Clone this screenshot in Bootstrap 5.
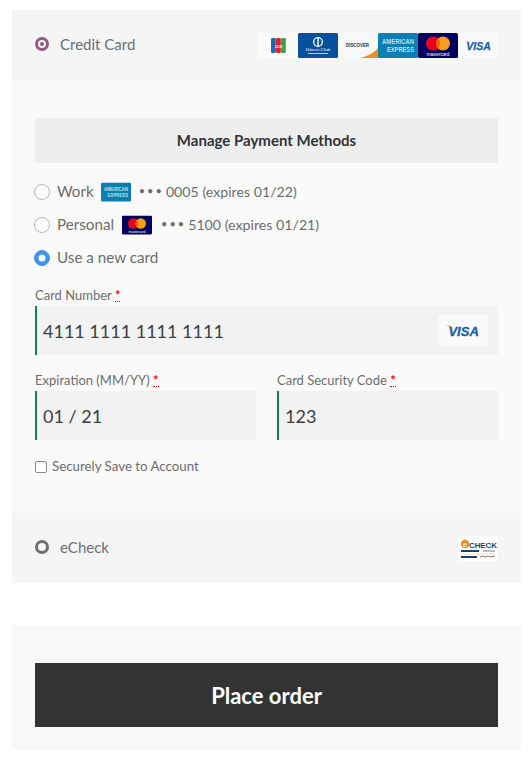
<!DOCTYPE html>
<html lang="en">
<head>
<meta charset="utf-8">
<title>Checkout</title>
<link rel="stylesheet" href="https://cdn.jsdelivr.net/npm/bootstrap@5.3.0/dist/css/bootstrap.min.css">
<style>
html,body{background:#fff;}
body{font-family:Lato,"Liberation Sans",sans-serif;color:#6d6d6d;margin:0;padding:10px 7px 9px 12px;width:528px;height:759px;overflow:hidden;}
.pay-head{height:70px;background:#f5f5f5;padding:0 23px;display:flex;align-items:center;justify-content:space-between;}
.pay-name{font-size:15px;color:#6d6d6d;display:flex;align-items:center;gap:11px;line-height:20px;padding-bottom:2px;}
.dot-a{width:14px;height:14px;border-radius:50%;border:3px solid #96588a;position:relative;}
.dot-a::after{content:"";position:absolute;inset:2px;background:#96588a;border-radius:50%;}
.dot-b{width:14px;height:14px;border-radius:50%;border:3px solid #6d6d6d;}
.logos{display:flex;}
.logos svg{display:block;}
.pay-body{background:#fafafa;height:433px;padding:38px 23px 0;}
.btn-manage{display:block;width:100%;height:45px;background:#eee;color:#333;font-weight:700;font-size:15px;border:0;border-radius:0;padding:0;}
.saved-list{margin-top:12px;margin-left:-1px;}
.saved-row{display:flex;align-items:center;height:33px;font-size:15.2px;color:#6d6d6d;}
.saved-row svg{display:block;}
.saved-row .form-check-input{width:16px;height:16px;margin:0 7px 0 0;flex:none;background-color:#fff;border:1px solid #b5b5b5;}
.saved-row .form-check-input:checked{background-color:#3f93f5;border-color:#3f93f5;}
.ico-work{margin:0 8px 0 7px;}
.ico-pers{margin:0 9px 0 8px;}
.dots{letter-spacing:2px;font-size:11px;margin-right:2px;}
.detail{font-size:14.2px;}
.card-field{margin-top:13px;}
.fld-label{font-size:13px;color:#6d6d6d;margin:0;display:block;line-height:16px;height:19px;}
.req{color:#f00;font-weight:700;border-bottom:1px dotted #f00;line-height:1;display:inline-block;height:13px;}
.fld-input{height:49px;border:0;border-left:2px solid #0f834d;border-radius:0;background:#f2f2f2;color:#3d3f45;font-size:18px;padding:0 6px;box-shadow:none;}
.fld-input:focus{background:#f2f2f2;color:#3d3f45;border-left:2px solid #0f834d;box-shadow:none;}
.fld-wrap{position:relative;}
.fld-logo{position:absolute;right:10px;top:9px;}
.fld-logo svg{display:block;}
.fld-pair{display:grid;grid-template-columns:221px 221px;column-gap:21px;margin-top:17px;}
.save-row{display:flex;align-items:center;gap:5px;font-size:13.300px;margin:17px 0 0;color:#6d6d6d;}
.save-row .form-check-input{width:12px;height:12px;margin:0;border-radius:2px;border:1px solid #8c8c8c;flex:none;background-color:#fff;}
.gap-pl{margin-top:42px;height:125px;background:#f8f8f8;padding:38px 23px 0;}
.btn-place{display:block;width:100%;height:64px;background:#333;color:#fff;font-weight:700;font-size:22px;border:0;border-radius:0;padding:0;}
.btn-place:hover{background:#333;color:#fff;}
.btn-manage:hover{background:#eee;color:#333;}
</style>
</head>
<body>
<svg width="0" height="0" class="d-none">
<defs>
<symbol id="c-visa" viewBox="0 0 40 25"><rect width="40" height="25" rx="1.5" fill="#fafafa"/><path d="M6 8.500c2.200.2 4 1.300 5 3.500l-1-3.500z" fill="#f4a51c"/><text x="20.500" y="17.200" text-anchor="middle" font-family="Liberation Sans,sans-serif" font-size="10.500" font-style="italic" font-weight="700" fill="#1a5fa8" stroke="#1a5fa8" stroke-width=".25">VISA</text></symbol>
<symbol id="c-amex" viewBox="0 0 40 25"><rect width="40" height="25" rx="1.500" fill="#0b7fb2"/><text x="4" y="10.500" textLength="32" lengthAdjust="spacingAndGlyphs" font-family="Liberation Sans,sans-serif" font-size="7" font-weight="700" fill="#bfe0ee">AMERICAN</text><text x="9" y="18.800" textLength="27" lengthAdjust="spacingAndGlyphs" font-family="Liberation Sans,sans-serif" font-size="7" font-weight="700" fill="#bfe0ee">EXPRESS</text></symbol>
<symbol id="c-mc" viewBox="0 0 40 25"><rect width="40" height="25" rx="1.500" fill="#00005f"/><circle cx="15" cy="10.500" r="7" fill="#e8001c"/><circle cx="25" cy="10.500" r="7" fill="#f79e1b"/><path d="M20 5.600a7 7 0 0 1 0 9.800a7 7 0 0 1 0-9.800z" fill="#ff5f00"/><text x="20" y="22.800" text-anchor="middle" font-family="Liberation Sans,sans-serif" font-size="4.500" fill="#fff">mastercard</text></symbol>
</defs>
</svg>

<section class="pay-head">
  <div class="pay-name"><span class="dot-a"></span><span>Credit Card</span></div>
  <div class="logos">
    <svg width="40" height="25" viewBox="0 0 40 25"><rect width="40" height="25" rx="1.500" fill="#fafafa"/><rect x="13" y="5" width="4.800" height="15" rx="1.200" fill="#1769b5"/><rect x="18" y="5" width="4.800" height="15" rx="1.200" fill="#d8232f"/><rect x="23" y="5" width="4.800" height="15" rx="1.200" fill="#3aa53f"/><text x="20.500" y="14.500" text-anchor="middle" font-family="Liberation Sans,sans-serif" font-size="4" font-weight="700" fill="#eef2f4">JCB</text></svg>
    <svg width="40" height="25" viewBox="0 0 40 25"><rect width="40" height="25" rx="1.500" fill="#06509c"/><circle cx="20" cy="9" r="5" fill="#fff"/><circle cx="20" cy="9" r="3.700" fill="#06509c"/><rect x="19.300" y="5" width="1.400" height="8" fill="#fff"/><text x="20" y="18" text-anchor="middle" font-family="Liberation Serif,serif" font-size="5" fill="#fff">Diners Club</text><rect x="10" y="20" width="20" height="1" fill="#b9cde3"/></svg>
    <svg width="40" height="25" viewBox="0 0 40 25"><rect width="40" height="25" fill="#f8f8f8"/><path d="M22 25C30 23 36 20 40 15V25z" fill="#f28a1f"/><text x="19.500" y="14" text-anchor="middle" font-family="Liberation Sans,sans-serif" font-size="5" font-weight="700" fill="#333" textLength="23" lengthAdjust="spacingAndGlyphs">DISCOVER</text></svg>
    <svg width="40" height="25"><use href="#c-amex"/></svg>
    <svg width="40" height="25"><use href="#c-mc"/></svg>
    <svg width="40" height="25"><use href="#c-visa"/></svg>
  </div>
</section>

<section class="pay-body">
  <button type="button" class="btn btn-manage">Manage Payment Methods</button>
  <div class="saved-list">
    <div class="saved-row"><input class="form-check-input" type="radio" name="tok"><span>Work</span><svg class="ico-work" width="30" height="20"><use href="#c-amex"/></svg><span class="dots">•••</span><span class="detail">0005 (expires 01/22)</span></div>
    <div class="saved-row"><input class="form-check-input" type="radio" name="tok"><span>Personal</span><svg class="ico-pers" width="30" height="20"><use href="#c-mc"/></svg><span class="dots">•••</span><span class="detail">5100 (expires 01/21)</span></div>
    <div class="saved-row"><input class="form-check-input" type="radio" name="tok" checked><span>Use a new card</span></div>
  </div>
  <div class="card-field">
    <label class="fld-label">Card Number <span class="req">*</span></label>
    <div class="fld-wrap">
      <input class="form-control fld-input" value="4111 1111 1111 1111">
      <span class="fld-logo"><svg width="50" height="31"><use href="#c-visa"/></svg></span>
    </div>
  </div>
  <div class="fld-pair">
    <div>
      <label class="fld-label">Expiration (MM/YY) <span class="req">*</span></label>
      <input class="form-control fld-input" value="01 / 21">
    </div>
    <div>
      <label class="fld-label">Card Security Code <span class="req">*</span></label>
      <input class="form-control fld-input" value="123">
    </div>
  </div>
  <label class="save-row"><input class="form-check-input" type="checkbox"><span>Securely Save to Account</span></label>
</section>

<section class="pay-head">
  <div class="pay-name"><span class="dot-b"></span><span>eCheck</span></div>
  <svg width="40" height="25" viewBox="0 0 40 25"><rect width="40" height="25" rx="2" fill="#fff"/><circle cx="7" cy="8" r="4.200" fill="#ee8a1d"/><text x="7" y="10.500" text-anchor="middle" font-family="Liberation Sans,sans-serif" font-size="7" font-weight="700" fill="#fff">e</text><text x="11" y="11.500" textLength="28" lengthAdjust="spacingAndGlyphs" font-family="Liberation Sans,sans-serif" font-size="8" font-weight="700" fill="#1d3f66">CHECK</text><rect x="3" y="14" width="18" height="2" fill="#1d3f66"/><rect x="3" y="20" width="16" height="2" fill="#1d3f66"/><rect x="3" y="17.500" width="34" height="1" fill="#f4d9b8"/><path d="M25 15h12M22 21l3-1 2 1 3-1 2 1 5-1" stroke="#556" stroke-width=".8" fill="none"/></svg>
</section>

<section class="gap-pl">
  <button type="button" class="btn btn-place">Place order</button>
</section>
</body>
</html>
